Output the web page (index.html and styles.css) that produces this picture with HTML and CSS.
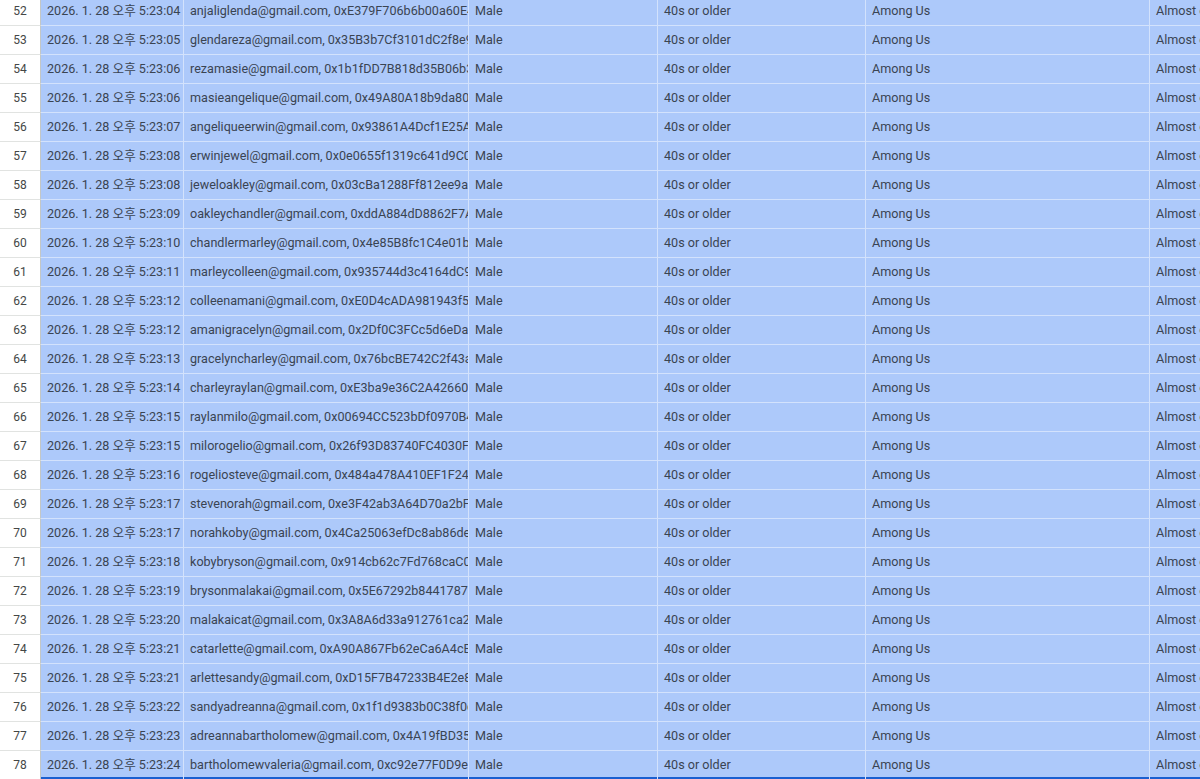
FILE: index.html
```html
<!DOCTYPE html>
<html lang="ko">
<head>
    <meta charset="UTF-8">
    <meta name="viewport" content="width=device-width, initial-scale=1.0">
    <title>Responses</title>
    <link rel="stylesheet" href="styles.css">
</head>
<body>
    <div class="sheet">
        <div class="grid" id="grid"></div>
    </div>

    <script>
        const rows = [
            [52, '04', 'anjaliglenda@gmail.com, 0xE379F706b6b00a60E4c1'],
            [53, '05', 'glendareza@gmail.com, 0x35B3b7Cf3101dC2f8e91'],
            [54, '06', 'rezamasie@gmail.com, 0x1b1fDD7B818d35B06b3a'],
            [55, '06', 'masieangelique@gmail.com, 0x49A80A18b9da80c2'],
            [56, '07', 'angeliqueerwin@gmail.com, 0x93861A4Dcf1E25A7'],
            [57, '08', 'erwinjewel@gmail.com, 0x0e0655f1319c641d9C0a'],
            [58, '08', 'jeweloakley@gmail.com, 0x03cBa1288Ff812ee9a4'],
            [59, '09', 'oakleychandler@gmail.com, 0xddA884dD8862F7A1'],
            [60, '10', 'chandlermarley@gmail.com, 0x4e85B8fc1C4e01b5'],
            [61, '11', 'marleycolleen@gmail.com, 0x935744d3c4164dC9a'],
            [62, '12', 'colleenamani@gmail.com, 0xE0D4cADA981943f57'],
            [63, '12', 'amanigracelyn@gmail.com, 0x2Df0C3FCc5d6eDa8'],
            [64, '13', 'gracelyncharley@gmail.com, 0x76bcBE742C2f43a'],
            [65, '14', 'charleyraylan@gmail.com, 0xE3ba9e36C2A42660'],
            [66, '15', 'raylanmilo@gmail.com, 0x00694CC523bDf0970B4'],
            [67, '15', 'milorogelio@gmail.com, 0x26f93D83740FC4030F2'],
            [68, '16', 'rogeliosteve@gmail.com, 0x484a478A410EF1F24c'],
            [69, '17', 'stevenorah@gmail.com, 0xe3F42ab3A64D70a2bF9'],
            [70, '17', 'norahkoby@gmail.com, 0x4Ca25063efDc8ab86de'],
            [71, '18', 'kobybryson@gmail.com, 0x914cb62c7Fd768caC0d'],
            [72, '19', 'brysonmalakai@gmail.com, 0x5E67292b84417873'],
            [73, '20', 'malakaicat@gmail.com, 0x3A8A6d33a912761ca2e'],
            [74, '21', 'catarlette@gmail.com, 0xA90A867Fb62eCa6A4cB'],
            [75, '21', 'arlettesandy@gmail.com, 0xD15F7B47233B4E2e8'],
            [76, '22', 'sandyadreanna@gmail.com, 0x1f1d9383b0C38f0d'],
            [77, '23', 'adreannabartholomew@gmail.com, 0x4A19fBD35e2'],
            [78, '24', 'bartholomewvaleria@gmail.com, 0xc92e77F0D9e1a']
        ];

        const grid = document.getElementById('grid');
        rows.forEach(([num, sec, contact], i) => {
            const row = document.createElement('div');
            row.classList.add('row');
            if (i === rows.length - 1) row.classList.add('last');
            row.innerHTML = `
                <div class="cell head">${num}</div>
                <div class="cell">2026. 1. 28 오후 5:23:${sec}</div>
                <div class="cell">${contact}</div>
                <div class="cell">Male</div>
                <div class="cell">40s or older</div>
                <div class="cell">Among Us</div>
                <div class="cell">Almost every day</div>
            `;
            grid.appendChild(row);
        });
    </script>
</body>
</html>
```

FILE: styles.css
```css
body {
    margin: 0;
    background: #fff;
    font-family: Roboto, "Noto Sans CJK KR", sans-serif;
    overflow: hidden;
}
.sheet {
    width: 1200px;
    height: 779px;
    overflow: hidden;
}
.grid {
    margin-top: -3px;
}
.row {
    display: grid;
    grid-template-columns: 41px 143px 285px 189px 208px 284px 200px;
    height: 29px;
}
.cell {
    box-sizing: border-box;
    height: 29px;
    padding: 0 6px;
    background: #adc9fa;
    color: #3a4452;
    font-size: 12.6px;
    line-height: 28px;
    white-space: nowrap;
    overflow: hidden;
    border-right: 1px solid #d3e2fc;
    border-bottom: 1px solid #d3e2fc;
}
.cell.head {
    background: #fff;
    color: #444746;
    font-size: 12px;
    text-align: center;
    padding: 0;
    border-right: 1px solid #c4c7c5;
    border-bottom: 1px solid #e1e3e1;
}
.row.last .cell:not(.head) {
    box-shadow: inset 0 -2px 0 #1a5fd0;
}
```
